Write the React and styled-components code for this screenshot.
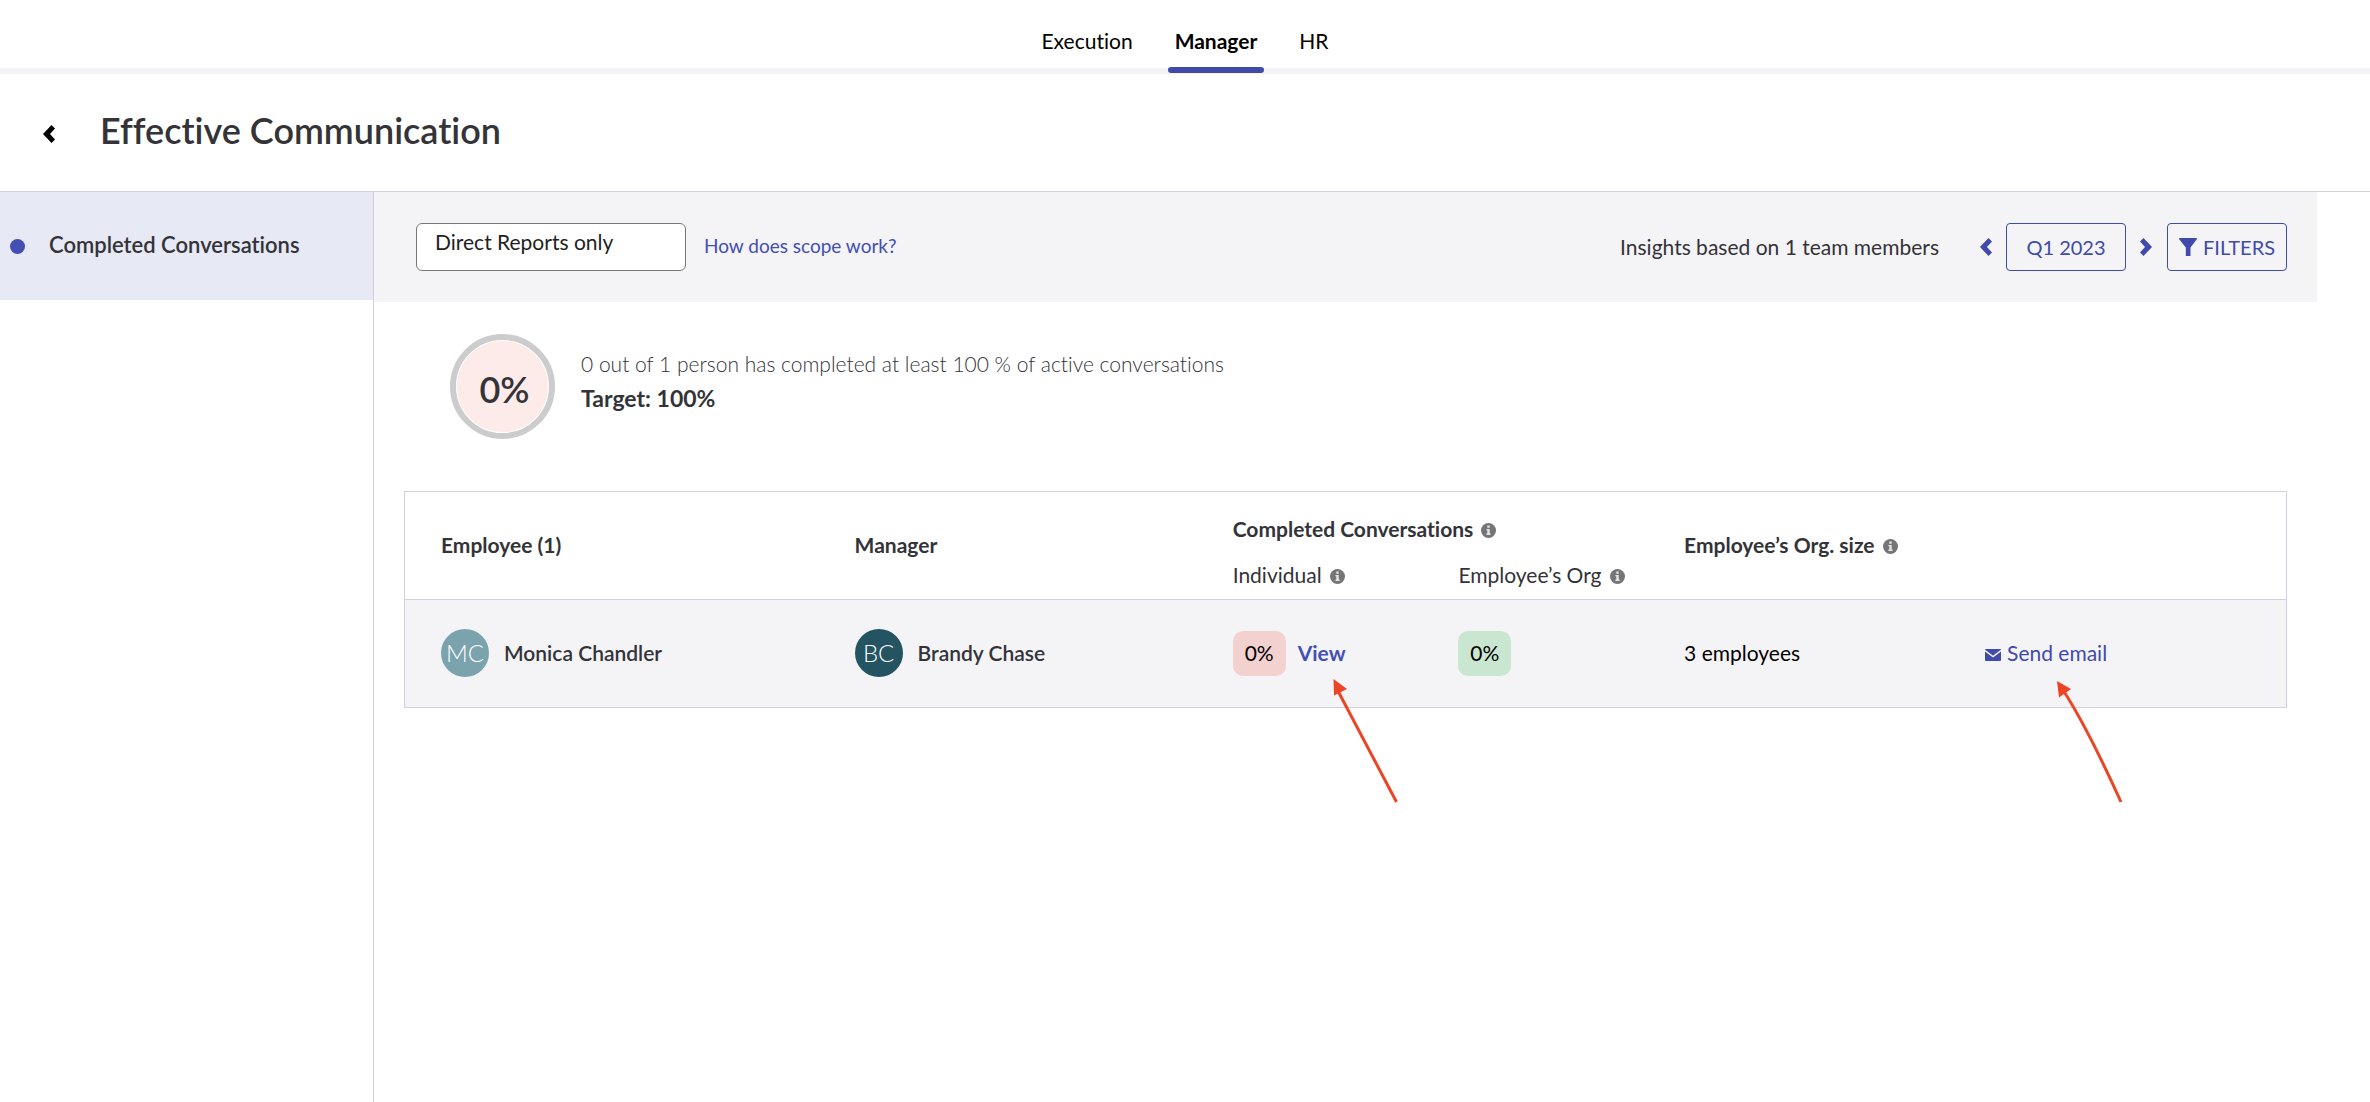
import React from "react";
import styled, { createGlobalStyle } from "styled-components";

const tabs = ["Execution", "Manager", "HR"];

const employees = [
  {
    id: 1,
    name: "Monica Chandler",
    initials: "MC",
    avatarColor: "#7ba3ae",
    manager: "Brandy Chase",
    managerInitials: "BC",
    managerColor: "#245362",
    individual: "0%",
    org: "0%",
    orgSize: "3 employees",
  },
];

function Chevron({ direction = "left" }) {
  const points =
    direction === "left"
      ? "0,9 8.5,0 12,3.5 7,9 12,14.5 8.5,18"
      : "12,9 3.5,0 0,3.5 5,9 0,14.5 3.5,18";
  return (
    <svg width="12" height="18" viewBox="0 0 12 18" aria-hidden="true">
      <polygon points={points} fill="currentColor" />
    </svg>
  );
}

function FilterIcon() {
  return (
    <svg width="18" height="18" viewBox="0 0 18 18" aria-hidden="true">
      <path
        d="M0.6 0H17.4Q18.3 0.6 17.6 1.6L11.5 9.4V18H6.8V9.4L0.4 1.6Q-0.3 0.6 0.6 0Z"
        fill="currentColor"
      />
    </svg>
  );
}

function MailIcon() {
  return (
    <svg width="16" height="12" viewBox="0 0 16 12" aria-hidden="true">
      <rect width="16" height="12" rx="1" fill="currentColor" />
      <path
        d="M0 1.6L8 7.6L16 1.6"
        fill="none"
        stroke="#f4f4f7"
        strokeWidth="1.4"
      />
    </svg>
  );
}

function InfoIcon() {
  return (
    <svg width="15" height="15" viewBox="0 0 15 15" aria-hidden="true">
      <circle cx="7.5" cy="7.5" r="7.5" fill="#757575" />
      <path
        d="M6.3 2.6H8.7V4.7H6.3ZM5.4 6H8.7V10.6H9.6V12H5.4V10.6H6.3V7.3H5.4Z"
        fill="#e4e4e4"
      />
    </svg>
  );
}

function App() {
  const [activeTab, setActiveTab] = React.useState("Manager");

  return (
    <>
      <GlobalStyle />
      <Page>
        <TabBar>
          {tabs.map((tab) => (
            <TabButton
              key={tab}
              $active={tab === activeTab}
              onClick={() => setActiveTab(tab)}
            >
              {tab}
            </TabButton>
          ))}
        </TabBar>
        <PageHeader>
          <BackButton aria-label="Back">
            <Chevron />
          </BackButton>
          <PageTitle>Effective Communication</PageTitle>
        </PageHeader>
        <Body>
          <Sidebar>
            <SidebarLink href="#completed">
              <SidebarDot />
              <SidebarText>Completed Conversations</SidebarText>
            </SidebarLink>
          </Sidebar>
          <Main>
            <Toolbar>
              <ScopeSelect aria-label="Scope" defaultValue="direct">
                <option value="direct">Direct Reports only</option>
                <option value="all">All Reports</option>
              </ScopeSelect>
              <HelpLink href="#scope">How does scope work?</HelpLink>
              <InsightText>Insights based on 1 team members</InsightText>
              <PeriodPicker>
                <ArrowButton aria-label="Previous quarter">
                  <Chevron />
                </ArrowButton>
                <OutlineButton>Q1 2023</OutlineButton>
                <ArrowButton aria-label="Next quarter">
                  <Chevron direction="right" />
                </ArrowButton>
              </PeriodPicker>
              <OutlineButton>
                <FilterIcon />
                FILTERS
              </OutlineButton>
            </Toolbar>
            <Summary>
              <ScoreRing>
                <ScoreValue>0%</ScoreValue>
              </ScoreRing>
              <div>
                <SummaryText>
                  0 out of 1 person has completed at least 100 % of active
                  conversations
                </SummaryText>
                <TargetText>Target: 100%</TargetText>
              </div>
            </Summary>
            <TableBox>
              <Table>
                <colgroup>
                  <Col />
                  <Col $width="20.1%" />
                  <Col $width="12%" />
                  <Col $width="12%" />
                  <Col $width="16%" />
                  <Col $width="16%" />
                </colgroup>
                <thead>
                  <GroupRow>
                    <FirstHeadCell rowSpan={2}>Employee (1)</FirstHeadCell>
                    <HeadCell rowSpan={2}>Manager</HeadCell>
                    <GroupCell colSpan={2}>
                      <Label>
                        Completed Conversations <InfoIcon />
                      </Label>
                    </GroupCell>
                    <HeadCell rowSpan={2}>
                      <Label>
                        Employee’s Org. size <InfoIcon />
                      </Label>
                    </HeadCell>
                    <HeadCell rowSpan={2} aria-label="Actions" />
                  </GroupRow>
                  <SubRow>
                    <SubCell>
                      <Label>
                        Individual <InfoIcon />
                      </Label>
                    </SubCell>
                    <SubCell>
                      <Label>
                        Employee’s Org <InfoIcon />
                      </Label>
                    </SubCell>
                  </SubRow>
                </thead>
                <tbody>
                  {employees.map((employee) => (
                    <Row key={employee.id}>
                      <FirstCell>
                        <Person>
                          <Avatar $color={employee.avatarColor}>
                            {employee.initials}
                          </Avatar>
                          {employee.name}
                        </Person>
                      </FirstCell>
                      <Cell>
                        <Person>
                          <Avatar $color={employee.managerColor}>
                            {employee.managerInitials}
                          </Avatar>
                          {employee.manager}
                        </Person>
                      </Cell>
                      <Cell>
                        <Action>
                          <Badge $color="#f2d1cf">{employee.individual}</Badge>
                          <ViewLink href="#view">View</ViewLink>
                          <Pointer
                            $left={96}
                            width="72"
                            height="130"
                            viewBox="0 0 72 130"
                          >
                            <path d="M9 14L67.5 125" />
                            <polygon points="4.5,2 18,12 5,18.5" />
                          </Pointer>
                        </Action>
                      </Cell>
                      <Cell>
                        <Badge $color="#c9e6d1">{employee.org}</Badge>
                      </Cell>
                      <Cell>{employee.orgSize}</Cell>
                      <Cell>
                        <Action>
                          <MailLink href="#email">
                            <MailIcon />
                            <span>Send email</span>
                          </MailLink>
                          <Pointer
                            $left={68}
                            width="72"
                            height="130"
                            viewBox="0 0 72 130"
                          >
                            <path d="M10 13Q34 50 68 125" />
                            <polygon points="4,4 18,12 6,20.5" />
                          </Pointer>
                        </Action>
                      </Cell>
                    </Row>
                  ))}
                </tbody>
              </Table>
            </TableBox>
          </Main>
        </Body>
      </Page>
    </>
  );
}

export default App;

const GlobalStyle = createGlobalStyle`
  * {
    box-sizing: border-box;
  }
  body {
    margin: 0;
    background-color: #fff;
    color: #333338;
    font-family: Lato, "Liberation Sans", sans-serif;
    font-size: 21px;
    line-height: 24px;
    font-variant-ligatures: none;
  }
  button, select {
    margin: 0;
    font-family: inherit;
    font-size: inherit;
    line-height: inherit;
    font-variant-ligatures: inherit;
  }
  button {
    padding: 0;
    border: none;
    background-color: transparent;
    cursor: pointer;
  }
  a {
    color: #434fb2;
    text-decoration: none;
  }
  svg {
    flex-shrink: 0;
  }
`;

const Page = styled.div`
  min-height: 100vh;
  display: flex;
  flex-direction: column;
`;

const TabBar = styled.nav`
  height: 74px;
  display: flex;
  justify-content: center;
  gap: 28px;
  border-bottom: 6px solid #f4f4f7;
`;

const TabButton = styled.button`
  height: 73px;
  padding: 8px 7px 0;
  color: #000;
  font-weight: ${(props) => (props.$active ? 700 : 400)};
  position: relative;

  &::after {
    content: "";
    position: absolute;
    left: 0;
    right: 0;
    bottom: 0;
    height: 6px;
    border-radius: 3px;
    background-color: ${(props) => (props.$active ? "#3f4aab" : "transparent")};
  }
`;

const PageHeader = styled.header`
  height: 118px;
  display: flex;
  align-items: center;
  gap: 45px;
  padding-left: 43px;
  border-bottom: 1px solid #d0d0de;
`;

const BackButton = styled.button`
  display: flex;
  padding-top: 2px;
  color: #000;
`;

const PageTitle = styled.h1`
  margin: 0;
  padding-bottom: 6px;
  font-size: 36px;
  line-height: 44px;
  font-weight: 600;
`;

const Body = styled.div`
  flex: 1;
  display: flex;
`;

const Sidebar = styled.aside`
  width: 374px;
  flex-shrink: 0;
  border-right: 1px solid #d0d0de;
`;

const SidebarLink = styled.a`
  height: 108px;
  display: flex;
  align-items: center;
  gap: 24px;
  padding-left: 10px;
  background-color: #e7e9f5;
  color: #333338;
  font-size: 22px;
  font-weight: 600;
`;

const SidebarDot = styled.span`
  width: 15px;
  height: 15px;
  border-radius: 50%;
  background-color: #434fb2;
`;

const SidebarText = styled.span`
  padding-bottom: 2px;
`;

const Main = styled.main`
  flex: 1;
  min-width: 0;
  padding-right: 53px;
`;

const Toolbar = styled.div`
  height: 110px;
  display: flex;
  align-items: center;
  padding: 0 30px 0 42px;
  background-color: #f4f4f7;
`;

const ScopeSelect = styled.select`
  width: 270px;
  height: 48px;
  padding: 0 18px 10px;
  appearance: none;
  border: 1px solid #777;
  border-radius: 6px;
  background-color: #fff;
  color: #1f1f22;
`;

const HelpLink = styled.a`
  margin-left: 18px;
  padding-bottom: 2px;
  font-size: 19px;
`;

const InsightText = styled.span`
  margin-left: auto;
`;

const PeriodPicker = styled.div`
  display: flex;
  align-items: center;
  gap: 14px;
  margin: 0 15px 0 41px;
`;

const ArrowButton = styled.button`
  display: flex;
  color: #3f4aab;
`;

const OutlineButton = styled.button`
  width: 120px;
  height: 48px;
  display: flex;
  align-items: center;
  justify-content: center;
  gap: 6px;
  border: 1px solid #3f4aab;
  border-radius: 4px;
  color: #3f4aab;
  font-size: 20px;
`;

const Summary = styled.section`
  display: flex;
  gap: 26px;
  padding: 32px 0 52px 76px;
`;

const ScoreRing = styled.div`
  width: 105px;
  height: 105px;
  padding: 1px;
  border: 6px solid #ccc;
  border-radius: 50%;
`;

const ScoreValue = styled.div`
  height: 100%;
  display: flex;
  align-items: center;
  justify-content: center;
  padding: 4px 0 0 4px;
  border-radius: 50%;
  background-color: #fdebea;
  font-size: 36px;
  font-weight: 600;
`;

const SummaryText = styled.p`
  margin: 18px 0 10px;
  font-weight: 300;
`;

const TargetText = styled.p`
  margin: 0;
  font-size: 23px;
  font-weight: 700;
`;

const TableBox = styled.div`
  margin: 0 30px;
  border: 1px solid #d0d0de;
`;

const Table = styled.table`
  width: 100%;
  table-layout: fixed;
  border-collapse: collapse;
  text-align: left;
`;

const Col = styled.col`
  width: ${(props) => props.$width || "auto"};
`;

const GroupRow = styled.tr`
  height: 60px;
`;

const SubRow = styled.tr`
  height: 47px;
  border-bottom: 1px solid #d0d0de;
`;

const HeadCell = styled.th`
  padding: 0;
  font-weight: 700;
`;

const FirstHeadCell = styled(HeadCell)`
  padding-left: 36px;
`;

const GroupCell = styled(HeadCell)`
  padding-top: 14px;
`;

const SubCell = styled(HeadCell)`
  font-weight: 400;
`;

const Label = styled.span`
  display: flex;
  align-items: center;
  gap: 8px;

  svg {
    margin-top: 3px;
  }
`;

const Row = styled.tr`
  height: 108px;
  background-color: #f4f4f7;
  color: #000;
`;

const Cell = styled.td`
  padding: 0;
`;

const FirstCell = styled(Cell)`
  padding-left: 36px;
`;

const Person = styled.div`
  display: flex;
  align-items: center;
  gap: 15px;
  color: #333338;
  font-weight: 600;
`;

const Avatar = styled.span`
  width: 48px;
  height: 48px;
  display: flex;
  align-items: center;
  justify-content: center;
  border-radius: 50%;
  background-color: ${(props) => props.$color};
  color: #fff;
  font-size: 24px;
  font-weight: 300;
`;

const Action = styled.div`
  height: 46px;
  display: flex;
  align-items: center;
  gap: 12px;
  position: relative;
`;

const Badge = styled.span`
  width: 53px;
  height: 45px;
  display: flex;
  align-items: center;
  justify-content: center;
  border-radius: 10px;
  background-color: ${(props) => props.$color};
`;

const ViewLink = styled.a`
  font-weight: 700;
`;

const MailLink = styled.a`
  display: flex;
  align-items: center;
  gap: 6px;
  color: #3f4aab;

  svg {
    margin-top: 4px;
  }
`;

/* arrow that lies over the table and points at a link */
const Pointer = styled.svg`
  position: absolute;
  left: ${(props) => props.$left}px;
  top: 47px;
  pointer-events: none;

  path {
    fill: none;
    stroke: #eb4526;
    stroke-width: 3px;
  }
  polygon {
    fill: #eb4526;
  }
`;
